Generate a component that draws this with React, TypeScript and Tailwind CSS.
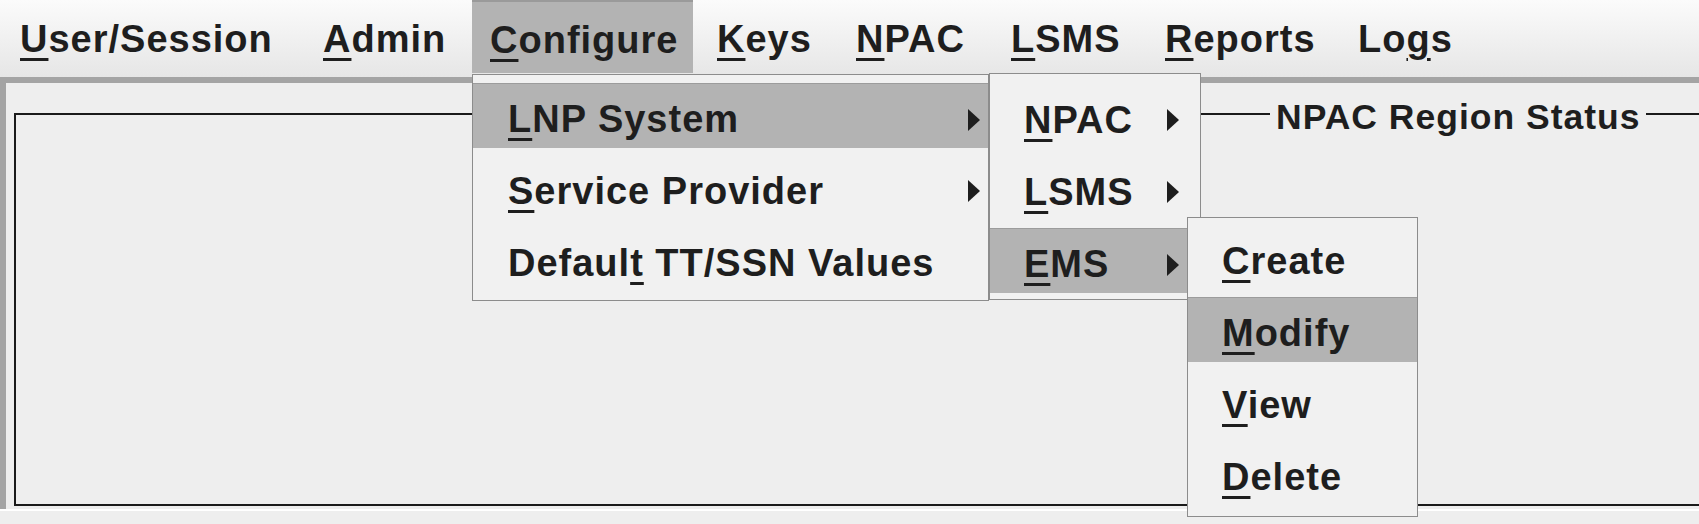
import type { ReactNode } from "react";

// mnemonic letter, drawn the way Swing underlines it
function M({ children }: { children: ReactNode }) {
  return (
    <span className="underline decoration-[3px] underline-offset-[6px]">
      {children}
    </span>
  );
}

function Arrow() {
  return (
    <svg width="12" height="22" viewBox="0 0 12 22" className="shrink-0">
      <polygon points="0,0 12,11 0,22" fill="#1e1e1e" />
    </svg>
  );
}

type Item = { label: ReactNode; arrow?: boolean; active?: boolean };

function Popup({
  items,
  className,
  padLeft,
  padRight,
}: {
  items: Item[];
  className: string;
  padLeft: string;
  padRight: string;
}) {
  return (
    <div className={`absolute border border-[#8c8c8c] bg-[#f1f1f1] ${className}`}>
      {items.map((it, i) => (
        <div key={i} className="h-[72px]">
          <div
            className={`flex h-[65px] items-center justify-between pt-[7px] ${padLeft} ${padRight} ${
              it.active ? "border-t border-[#9c9c9c] bg-[#b3b3b3]" : ""
            }`}
          >
            <span>{it.label}</span>
            {it.arrow && <Arrow />}
          </div>
        </div>
      ))}
    </div>
  );
}

const menus: { label: ReactNode; w: string; pl: string; active?: boolean }[] = [
  { label: <><M>U</M>ser/Session</>, w: "w-[303px]", pl: "pl-[18px]" },
  { label: <><M>A</M>dmin</>, w: "w-[167px]", pl: "pl-[18px]" },
  { label: <><M>C</M>onfigure</>, w: "w-[221px]", pl: "pl-[18px]", active: true },
  { label: <><M>K</M>eys</>, w: "w-[145px]", pl: "pl-[24px]" },
  { label: <><M>N</M>PAC</>, w: "w-[155px]", pl: "pl-[18px]" },
  { label: <><M>L</M>SMS</>, w: "w-[154px]", pl: "pl-[18px]" },
  { label: <><M>R</M>eports</>, w: "w-[193px]", pl: "pl-[18px]" },
  { label: <>Lo<M>g</M>s</>, w: "w-[140px]", pl: "pl-[18px]" },
];

export default function App() {
  return (
    <div className="relative h-[524px] w-[1699px] overflow-hidden bg-[#eeeeee] font-['Liberation_Sans',Arial,sans-serif] text-[38px] font-bold tracking-[1px] text-[#1e1e1e]">
      {/* menu bar */}
      <div className="flex h-[83px] items-start border-b-[6px] border-[#a4a4a4] bg-linear-to-b from-[#fbfbfb] to-[#e6e6e6] pl-[2px]">
        {menus.map((m, i) => (
          <div
            key={i}
            className={`flex h-[73px] shrink-0 items-center pt-[5px] ${m.w} ${m.pl} ${
              m.active ? "border-t-2 border-[#9a9a9a] bg-[#b3b3b3]" : ""
            }`}
          >
            <span className="leading-none">{m.label}</span>
          </div>
        ))}
      </div>

      {/* content panel */}
      <div className="flex h-[426px] border-l-[6px] border-[#a4a4a4]">
        <fieldset className="mt-[12px] ml-[8px] h-[411px] min-w-0 flex-1 border-2 border-r-0 border-[#1a1a1a]">
          <legend className="ml-[1254px] px-[6px] pt-[6px] text-[35.5px] leading-[32px]">
            NPAC Region Status
          </legend>
        </fieldset>
      </div>
      <div className="h-[2px] bg-white" />

      {/* Configure menu */}
      <Popup
        className="top-[74px] left-[472px] h-[227px] w-[517px] pt-[8px]"
        padLeft="pl-[35px]"
        padRight="pr-[8px]"
        items={[
          { label: <><M>L</M>NP System</>, arrow: true, active: true },
          { label: <><M>S</M>ervice Provider</>, arrow: true },
          { label: <>Defaul<M>t</M> TT/SSN Values</> },
        ]}
      />

      {/* LNP System submenu */}
      <Popup
        className="top-[73px] left-[989px] h-[227px] w-[212px] pt-[10px]"
        padLeft="pl-[34px]"
        padRight="pr-[21px]"
        items={[
          { label: <><M>N</M>PAC</>, arrow: true },
          { label: <><M>L</M>SMS</>, arrow: true },
          { label: <><M>E</M>MS</>, arrow: true, active: true },
        ]}
      />

      {/* EMS submenu */}
      <Popup
        className="top-[217px] left-[1187px] h-[300px] w-[231px] pt-[7px]"
        padLeft="pl-[34px]"
        padRight="pr-[10px]"
        items={[
          { label: <><M>C</M>reate</> },
          { label: <><M>M</M>odify</>, active: true },
          { label: <><M>V</M>iew</> },
          { label: <><M>D</M>elete</> },
        ]}
      />
    </div>
  );
}
